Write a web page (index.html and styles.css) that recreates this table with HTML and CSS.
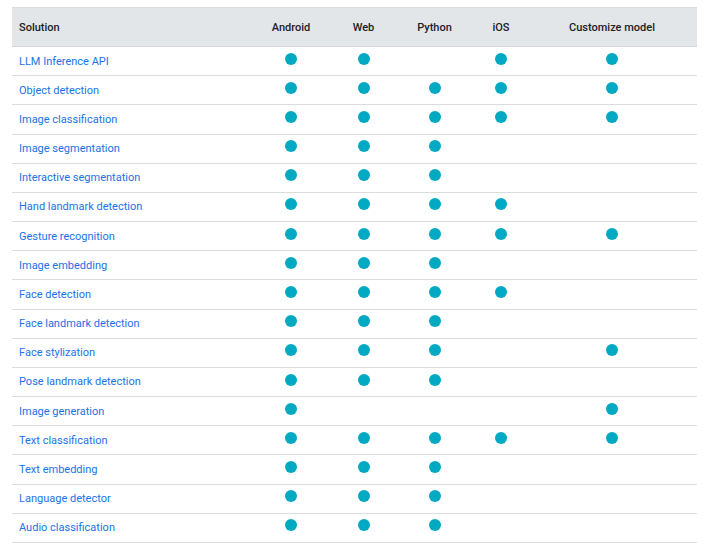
FILE: index.html
```html
<!DOCTYPE html>
<html>
<head>
<meta charset="utf-8">
<link rel="stylesheet" href="styles.css">
</head>
<body>
<div class="wrap">
<table class="matrix">
<colgroup>
<col class="c-sol"><col class="c-and"><col class="c-web"><col class="c-py"><col class="c-ios"><col class="c-cust">
</colgroup>
<thead>
<tr><th class="left">Solution</th><th>Android</th><th>Web</th><th>Python</th><th>iOS</th><th>Customize model</th></tr>
</thead>
<tbody>
<tr><td class="left"><a>LLM Inference API</a></td><td><span class="dot"></span></td><td><span class="dot"></span></td><td></td><td><span class="dot"></span></td><td><span class="dot"></span></td></tr>
<tr><td class="left"><a>Object detection</a></td><td><span class="dot"></span></td><td><span class="dot"></span></td><td><span class="dot"></span></td><td><span class="dot"></span></td><td><span class="dot"></span></td></tr>
<tr><td class="left"><a>Image classification</a></td><td><span class="dot"></span></td><td><span class="dot"></span></td><td><span class="dot"></span></td><td><span class="dot"></span></td><td><span class="dot"></span></td></tr>
<tr><td class="left"><a>Image segmentation</a></td><td><span class="dot"></span></td><td><span class="dot"></span></td><td><span class="dot"></span></td><td></td><td></td></tr>
<tr><td class="left"><a>Interactive segmentation</a></td><td><span class="dot"></span></td><td><span class="dot"></span></td><td><span class="dot"></span></td><td></td><td></td></tr>
<tr><td class="left"><a>Hand landmark detection</a></td><td><span class="dot"></span></td><td><span class="dot"></span></td><td><span class="dot"></span></td><td><span class="dot"></span></td><td></td></tr>
<tr><td class="left"><a>Gesture recognition</a></td><td><span class="dot"></span></td><td><span class="dot"></span></td><td><span class="dot"></span></td><td><span class="dot"></span></td><td><span class="dot"></span></td></tr>
<tr><td class="left"><a>Image embedding</a></td><td><span class="dot"></span></td><td><span class="dot"></span></td><td><span class="dot"></span></td><td></td><td></td></tr>
<tr><td class="left"><a>Face detection</a></td><td><span class="dot"></span></td><td><span class="dot"></span></td><td><span class="dot"></span></td><td><span class="dot"></span></td><td></td></tr>
<tr><td class="left"><a>Face landmark detection</a></td><td><span class="dot"></span></td><td><span class="dot"></span></td><td><span class="dot"></span></td><td></td><td></td></tr>
<tr><td class="left"><a>Face stylization</a></td><td><span class="dot"></span></td><td><span class="dot"></span></td><td><span class="dot"></span></td><td></td><td><span class="dot"></span></td></tr>
<tr><td class="left"><a>Pose landmark detection</a></td><td><span class="dot"></span></td><td><span class="dot"></span></td><td><span class="dot"></span></td><td></td><td></td></tr>
<tr><td class="left"><a>Image generation</a></td><td><span class="dot"></span></td><td></td><td></td><td></td><td><span class="dot"></span></td></tr>
<tr><td class="left"><a>Text classification</a></td><td><span class="dot"></span></td><td><span class="dot"></span></td><td><span class="dot"></span></td><td><span class="dot"></span></td><td><span class="dot"></span></td></tr>
<tr><td class="left"><a>Text embedding</a></td><td><span class="dot"></span></td><td><span class="dot"></span></td><td><span class="dot"></span></td><td></td><td></td></tr>
<tr><td class="left"><a>Language detector</a></td><td><span class="dot"></span></td><td><span class="dot"></span></td><td><span class="dot"></span></td><td></td><td></td></tr>
<tr><td class="left"><a>Audio classification</a></td><td><span class="dot"></span></td><td><span class="dot"></span></td><td><span class="dot"></span></td><td></td><td></td></tr>
</tbody>
</table>
</div>
</body>
</html>
```
FILE: styles.css
```css
html, body {
  margin: 0;
  padding: 0;
  background: #ffffff;
}
.wrap {
  padding: 7px 11px 0 12px;
  font-family: Roboto, "Noto Sans", Arial, sans-serif;
  font-size: 11px;
  color: #202124;
}
.matrix {
  width: 685px;
  border-collapse: collapse;
  table-layout: fixed;
}
.c-sol { width: 237px; }
.c-and { width: 84px; }
.c-web { width: 61px; }
.c-py { width: 81px; }
.c-ios { width: 52px; }
.c-cust { width: 170px; }
.matrix th {
  background: #e3e6e9;
  font-weight: 500;
  height: 38px;
  padding: 0;
  text-align: center;
  border-top: 1px solid #dadce0;
  border-bottom: 1px solid #d5d7db;
  vertical-align: middle;
}
.matrix td {
  height: 28.18px;
  padding: 0;
  text-align: center;
  vertical-align: middle;
  border-bottom: 1px solid #dadce0;
}
.matrix .left {
  text-align: left;
  padding-left: 7px;
}
.matrix a {
  color: #1a73e8;
  text-decoration: none;
}
.dot {
  display: inline-block;
  width: 12px;
  height: 12px;
  border-radius: 50%;
  background: #02a9c3;
  vertical-align: middle;
  position: relative;
  top: -3px;
}
```
